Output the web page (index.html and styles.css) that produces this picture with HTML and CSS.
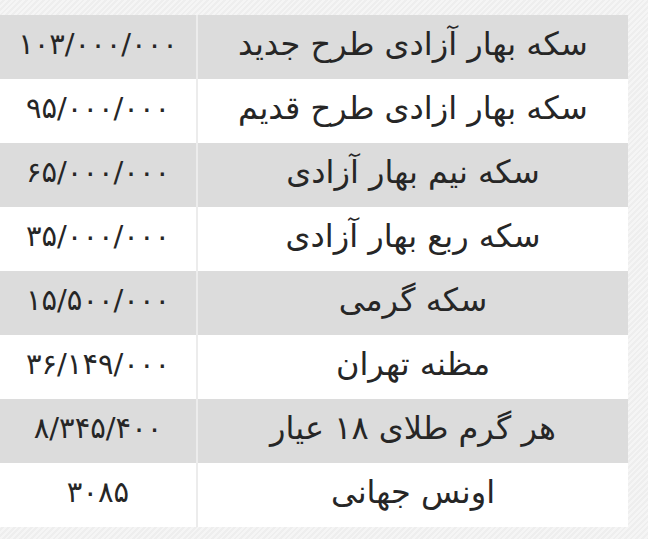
FILE: index.html
```html
<!DOCTYPE html>
<html lang="fa">
<head>
<meta charset="utf-8">
<link rel="stylesheet" href="styles.css">
</head>
<body>
<div class="page">
  <div class="prices">
    <div class="row shaded"><div class="name">سکه بهار آزادی طرح جدید</div><div class="price">۱۰۳/۰۰۰/۰۰۰</div></div>
    <div class="row"><div class="name">سکه بهار ازادی طرح قدیم</div><div class="price">۹۵/۰۰۰/۰۰۰</div></div>
    <div class="row shaded"><div class="name">سکه نیم بهار آزادی</div><div class="price">۶۵/۰۰۰/۰۰۰</div></div>
    <div class="row"><div class="name">سکه ربع بهار آزادی</div><div class="price">۳۵/۰۰۰/۰۰۰</div></div>
    <div class="row shaded"><div class="name">سکه گرمی</div><div class="price">۱۵/۵۰۰/۰۰۰</div></div>
    <div class="row"><div class="name">مظنه تهران</div><div class="price">۳۶/۱۴۹/۰۰۰</div></div>
    <div class="row shaded"><div class="name">هر گرم طلای ۱۸ عیار</div><div class="price">۸/۳۴۵/۴۰۰</div></div>
    <div class="row"><div class="name">اونس جهانی</div><div class="price">۳۰۸۵</div></div>
  </div>
</div>
</body>
</html>
```
FILE: styles.css
```css
html, body {
  margin: 0;
  padding: 0;
}
body {
  width: 648px;
  height: 539px;
  overflow: hidden;
  background-color: #f3f3f3;
  background-image: repeating-linear-gradient(135deg, #f5f5f5 0, #f5f5f5 2px, #eeeeee 2px, #eeeeee 4px);
  font-family: "DejaVu Sans", "Noto Sans", sans-serif;
  color: #262626;
}
.page {
  padding-top: 15px;
}
.prices {
  width: 628px;
  direction: rtl;
  display: flex;
  flex-direction: column;
}
.row {
  display: grid;
  grid-template-columns: 430px 198px;
  height: 64px;
  background: #ffffff;
}
.row.shaded {
  background: #dcdcdc;
}
.name, .price {
  display: flex;
  align-items: center;
  justify-content: center;
  box-sizing: border-box;
  padding-bottom: 6px;
}
.name {
  font-size: 32px;
}
.price {
  direction: ltr;
  font-size: 29px;
  border-right: 2px solid #ececec;
}
```
